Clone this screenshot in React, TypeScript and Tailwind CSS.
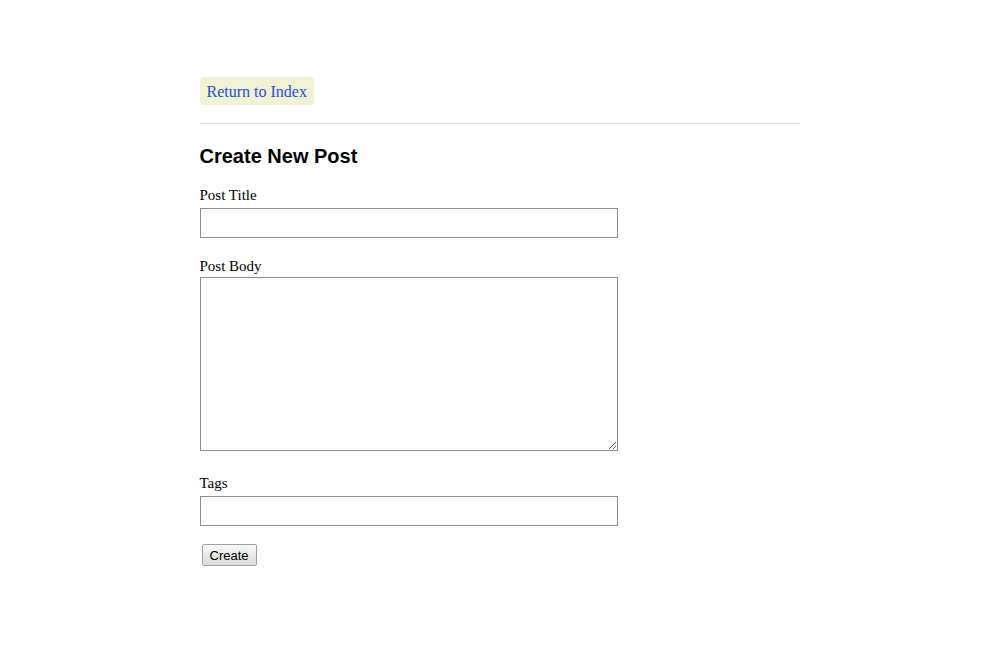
export default function App() {
	return (
		<div className="min-h-[662px] bg-white font-['Liberation_Serif',serif] text-[15px] text-black">
			<div className="mx-auto w-[600px] pt-[77px]">
				<a
					href="#"
					className="inline-block h-[28px] rounded-[4px] bg-[#f1f1d3] px-[7px] text-[16px] leading-[29px] text-[#1c4fd8]"
				>
					Return to Index
				</a>
				<hr className="mt-[18px] border-t border-[#dddddd]" />
				<h2 className="mt-[20px] font-['Liberation_Sans',Arial,sans-serif] text-[20px] font-bold leading-[24px]">
					Create New Post
				</h2>
				<form className="mt-[18px]">
					<label className="block leading-[18px]">Post Title</label>
					<input
						type="text"
						className="mt-[4px] block h-[30px] w-[418px] border border-[#8f8f8f] bg-white px-1"
					/>
					<label className="mt-[19px] block leading-[18px]">Post Body</label>
					<textarea className="mt-[2px] block h-[174px] w-[418px] resize border border-[#8f8f8f] bg-white" />
					<label className="mt-[23px] block leading-[18px]">Tags</label>
					<input
						type="text"
						className="mt-[4px] block h-[30px] w-[418px] border border-[#8f8f8f] bg-white px-1"
					/>
					<button
						type="button"
						className="mt-[18px] ml-[2px] h-[22px] rounded-[2px] border border-[#a0a0a0] bg-gradient-to-b from-[#f8f8f8] to-[#dcdcdc] px-[7px] font-['Liberation_Sans',Arial,sans-serif] text-[13px] leading-[22px]"
					>
						Create
					</button>
				</form>
			</div>
		</div>
	);
}
